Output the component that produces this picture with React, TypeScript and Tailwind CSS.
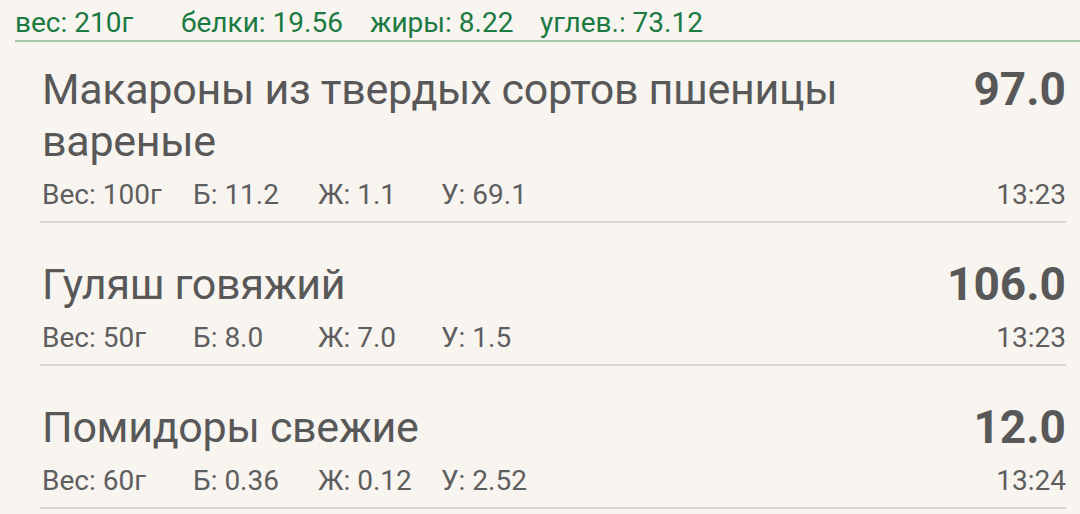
import React from "react";

const items = [
  { title: "Макароны из твердых сортов пшеницы вареные", kcal: "97.0", w: "Вес: 100г", b: "Б: 11.2", j: "Ж: 1.1", u: "У: 69.1", t: "13:23" },
  { title: "Гуляш говяжий", kcal: "106.0", w: "Вес: 50г", b: "Б: 8.0", j: "Ж: 7.0", u: "У: 1.5", t: "13:23" },
  { title: "Помидоры свежие", kcal: "12.0", w: "Вес: 60г", b: "Б: 0.36", j: "Ж: 0.12", u: "У: 2.52", t: "13:24" },
];

export default function App() {
  return (
    <div
      className="w-[1080px] h-[514px] overflow-hidden bg-[#f8f4f0]"
      style={{ fontFamily: "Roboto, 'Noto Sans', sans-serif" }}
    >
      <div className="ml-[15px] h-[42px] border-b-2 border-[#a5c9ac] flex items-end text-[28px] leading-[34px] text-[#1b7a42]">
        <span className="w-[166px]">вес: 210г</span>
        <span className="w-[189px]">белки: 19.56</span>
        <span className="w-[170px]">жиры: 8.22</span>
        <span>углев.: 73.12</span>
      </div>
      <div className="ml-[40px] mr-[14px]">
        {items.map((it, i) => (
          <div
            key={i}
            className={`border-b-2 border-[#d7d4d1] pl-[2px] pb-[8px] ${i === 0 ? "pt-[21px]" : "pt-[35px]"}`}
          >
            <div className="flex justify-between items-start gap-6">
              <div className="text-[43px] leading-[52px] tracking-[-0.3px] text-[#585858] max-w-[900px]">{it.title}</div>
              <div className="text-[46px] leading-[52px] font-bold text-[#585858] shrink-0">{it.kcal}</div>
            </div>
            <div className="flex items-center mt-[10px] text-[28px] leading-[36px] text-[#5e5e5e]">
              <span className="w-[151px]">{it.w}</span>
              <span className="w-[125px]">{it.b}</span>
              <span className="w-[123px]">{it.j}</span>
              <span className="flex-1">{it.u}</span>
              <span>{it.t}</span>
            </div>
          </div>
        ))}
      </div>
    </div>
  );
}
